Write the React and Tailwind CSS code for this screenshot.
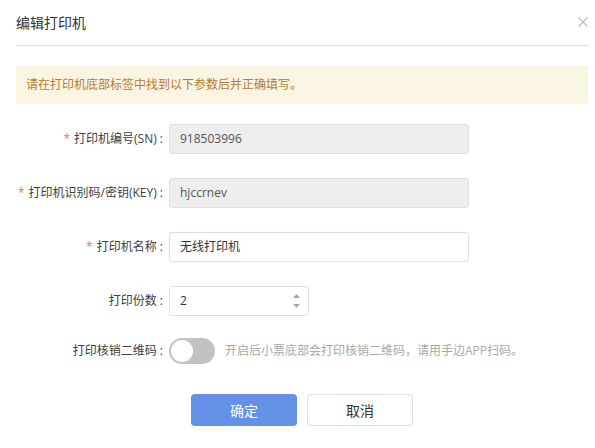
import React from "react";

function Label({ required, children }) {
  return (
    <div className="w-[153px] shrink-0 pr-[6px] text-right text-[12px] leading-[16px] text-[#404040]">
      {required && <span className="mr-[4px] text-[#f56c6c]">*</span>}
      {children}
    </div>
  );
}

function TextRow({ required, label, value, disabled }) {
  return (
    <div className="flex h-[30px] items-center">
      <Label required={required}>{label}</Label>
      <div
        className={
          "flex h-[30px] w-[300px] items-center rounded-[3px] border border-[#dcdfe6] px-[10px] text-[12px] " +
          (disabled ? "bg-[#eeeeee] text-[#555]" : "bg-white text-[#333]")
        }
      >
        {value}
      </div>
    </div>
  );
}

export default function App() {
  return (
    <div
      className="h-[448px] w-[595px] bg-white"
      style={{ fontFamily: '"Open Sans", "Noto Sans CJK SC", sans-serif' }}
    >
      <div className="ml-4 w-[572px]">
        <div className="flex h-[46px] items-center justify-between border-b border-[#dcdcdc]">
          <div className="text-[14px] leading-[20px] text-[#333]">编辑打印机</div>
          <svg width="10" height="10" viewBox="0 0 10 10" className="mb-[1px]">
            <path d="M0.5 0.5 L9.5 9.5 M9.5 0.5 L0.5 9.5" stroke="#bdbdbd" strokeWidth="1.2" />
          </svg>
        </div>

        <div className="mt-[20px] flex h-[38px] items-center bg-[#faf4e2] pl-[10px] text-[12px] text-[#b57c35]">
          请在打印机底部标签中找到以下参数后并正确填写。
        </div>

        <div className="mt-[20px] flex flex-col gap-[24px]">
          <TextRow required label="打印机编号(SN) :" value="918503996" disabled />
          <TextRow required label="打印机识别码/密钥(KEY) :" value="hjccrnev" disabled />
          <TextRow required label="打印机名称 :" value="无线打印机" />
          <div className="flex h-[30px] items-center">
            <Label>打印份数 :</Label>
            <div className="flex h-[30px] w-[140px] items-center justify-between rounded-[3px] border border-[#dcdfe6] pl-[10px] pr-[8px] text-[12px] text-[#333]">
              <span>2</span>
              <div className="flex flex-col gap-[6px]">
                <svg width="7" height="4" viewBox="0 0 7 4">
                  <path d="M0 4 L3.5 0 L7 4 Z" fill="#a6a6a6" />
                </svg>
                <svg width="7" height="4" viewBox="0 0 7 4">
                  <path d="M0 0 L3.5 4 L7 0 Z" fill="#a6a6a6" />
                </svg>
              </div>
            </div>
          </div>
        </div>

        <div className="mt-[22px] flex h-[26px] items-center">
          <Label>打印核销二维码 :</Label>
          <div className="relative h-[26px] w-[46px] shrink-0 rounded-full bg-[#c2c2c2]">
            <div className="absolute left-[2px] top-[2px] h-[22px] w-[22px] rounded-full bg-white" />
          </div>
          <div className="ml-[10px] text-[12px] text-[#a8a8a8]">
            开启后小票底部会打印核销二维码，请用手边APP扫码。
          </div>
        </div>

        <div className="mt-[30px] flex justify-center gap-[10px]">
          <div className="flex h-[32px] w-[106px] items-center justify-center rounded-[4px] bg-[#6490e6] text-[14px] text-white">
            确定
          </div>
          <div className="flex h-[32px] w-[106px] items-center justify-center rounded-[4px] border border-[#dcdfe6] bg-white text-[14px] text-[#333]">
            取消
          </div>
        </div>
      </div>
    </div>
  );
}
